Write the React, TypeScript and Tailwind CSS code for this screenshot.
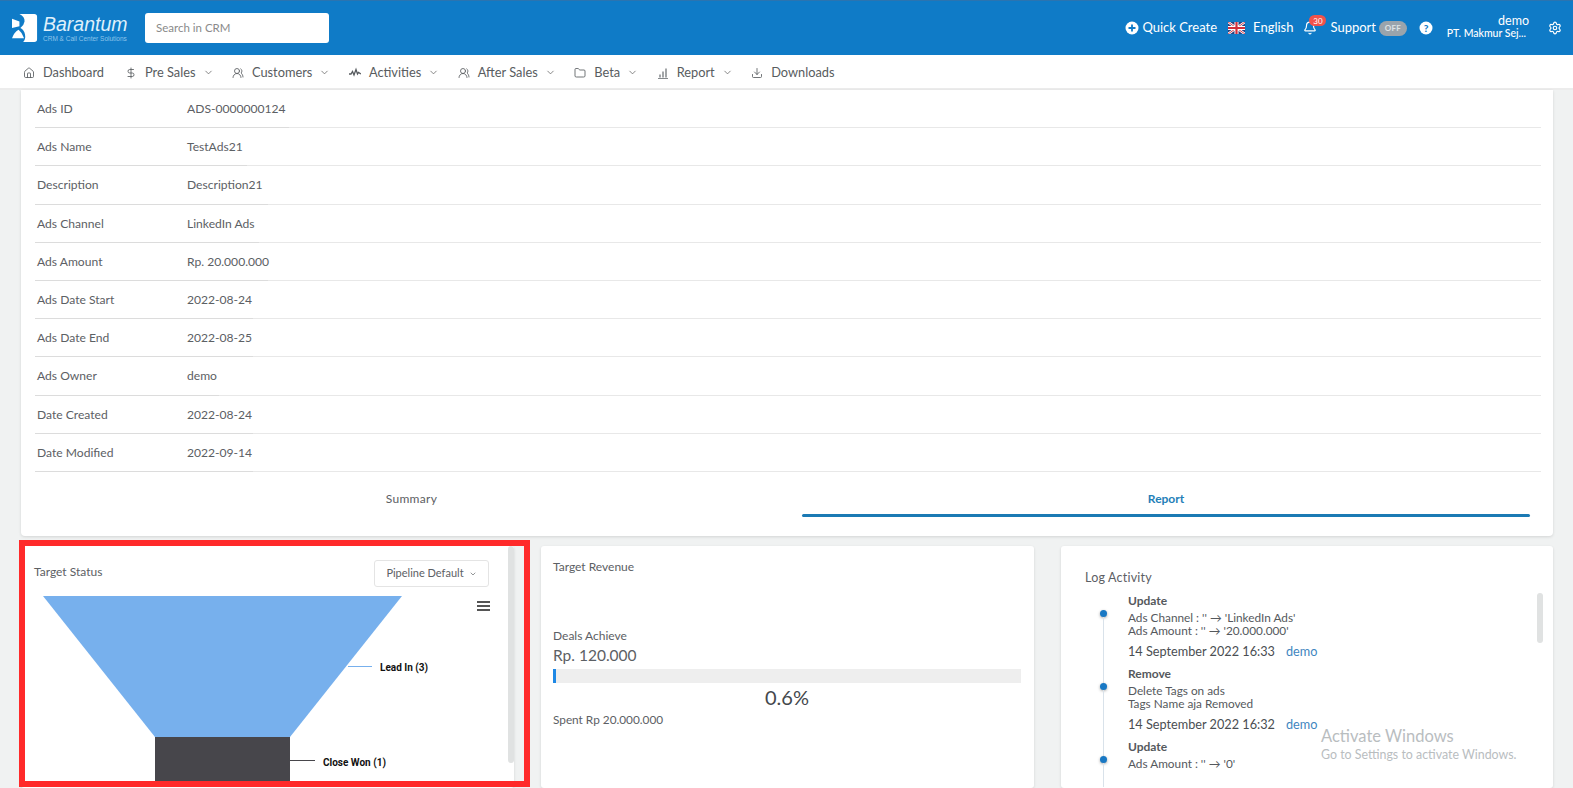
import React from "react";
import { House, DollarSign, UsersRound, Folder, Download, ChevronDown, Bell, Settings } from "lucide-react";

function PulseIcon({ className }: { size?: number; strokeWidth?: number; className?: string }) {
  return (
    <svg width="12" height="12" viewBox="0 0 12 12" fill="none" stroke="currentColor" strokeWidth="1.300" className={className}>
      <path d="M0 7 H2 L3.500 4.500 L5 8 L7 2.500 L8.500 7 L9.500 5.500 L12 7" />
    </svg>
  );
}

function BarsIcon({ className }: { size?: number; strokeWidth?: number; className?: string }) {
  return (
    <svg width="12" height="12" viewBox="0 0 12 12" fill="none" stroke="#85898c" className={className}>
      <path d="M1 11.500 H11" strokeWidth="1" />
      <path d="M3 10.500 V7.500 M6 10.500 V4.500 M9 10.500 V1.500" strokeWidth="1.500" />
    </svg>
  );
}

const navItems = [
  { label: "Dashboard", icon: House, chevron: false },
  { label: "Pre Sales", icon: DollarSign, chevron: true },
  { label: "Customers", icon: UsersRound, chevron: true },
  { label: "Activities", icon: PulseIcon, chevron: true },
  { label: "After Sales", icon: UsersRound, chevron: true },
  { label: "Beta", icon: Folder, chevron: true },
  { label: "Report", icon: BarsIcon, chevron: true },
  { label: "Downloads", icon: Download, chevron: false },
];

const rows = [
  ["Ads ID", "ADS-0000000124", "w-[254px]"],
  ["Ads Name", "TestAds21", "w-[212px]"],
  ["Description", "Description21", "w-[233px]"],
  ["Ads Channel", "LinkedIn Ads", "w-[224px]"],
  ["Ads Amount", "Rp. 20.000.000", "w-[233px]"],
  ["Ads Date Start", "2022-08-24", "w-[218px]"],
  ["Ads Date End", "2022-08-25", "w-[218px]"],
  ["Ads Owner", "demo", "w-[184px]"],
  ["Date Created", "2022-08-24", "w-[218px]"],
  ["Date Modified", "2022-09-14", "w-[218px]"],
];

function Logo() {
  return (
    <svg width="26" height="30" viewBox="0 0 28 32" className="shrink-0">
      <path d="M8 1 H24 Q27 1 27 4 V28 Q27 31 24 31 H12 Q15 28 14 23 Q13 18 9 16 Q13 13 13.500 9 Q14 4 8 1 Z" fill="#fff" />
      <path d="M0 6 L8 9 L8 14 L0 16 Z" fill="#fff" />
      <path d="M7 18 Q11 21 13 27 H0 Q2 21 7 18 Z" fill="#fff" />
    </svg>
  );
}

function Flag() {
  return (
    <svg width="17" height="12" viewBox="0 0 17 12" className="shrink-0">
      <rect width="17" height="12" fill="#27407f" />
      <path d="M0 0 L17 12 M17 0 L0 12" stroke="#fff" strokeWidth="2.400" />
      <path d="M0 0 L17 12 M17 0 L0 12" stroke="#d22f3c" strokeWidth="0.900" />
      <path d="M8.500 0 V12 M0 6 H17" stroke="#fff" strokeWidth="4" />
      <path d="M8.500 0 V12 M0 6 H17" stroke="#d22f3c" strokeWidth="2.200" />
    </svg>
  );
}

function Header() {
  return (
    <header className="flex h-[55px] shrink-0 items-center border-t border-[#2b74b0] bg-[#0f7bc7] pl-[12px] pr-[11px] text-white">
      <Logo />
      <div className="ml-[5px] flex w-[84px] flex-col">
        <span className="text-[19.500px] italic leading-[20px] [font-family:'Liberation_Sans',sans-serif] font-light text-[#dff0fb]">Barantum</span>
        <span className="mt-[1px] whitespace-nowrap text-[6.500px] leading-[7px] text-[#8ec4ea] [font-family:'Liberation_Sans',sans-serif]">CRM &amp; Call Center Solutions</span>
      </div>
      <div className="ml-[18px] flex h-[30px] w-[184px] items-center rounded-[3px] bg-white pl-[11px] text-[11.500px] text-[#8a8a8a]">Search in CRM</div>
      <div className="ml-auto flex items-center text-[13px]">
        <svg width="14" height="14" viewBox="0 0 14 14" className="shrink-0">
          <circle cx="7" cy="7" r="6.500" fill="#fff" />
          <path d="M7 3.500 V10.500 M3.500 7 H10.500" stroke="#0f7bc7" strokeWidth="1.800" />
        </svg>
        <span className="ml-[3px]">Quick Create</span>
        <span className="ml-[11px]"><Flag /></span>
        <span className="ml-[8px]">English</span>
        <span className="relative ml-[10px] flex">
          <Bell size={14} strokeWidth={2} />
          <span className="absolute -top-[6px] left-[6px] flex h-[11px] w-[17px] items-center justify-center rounded-full bg-[#f0524b] text-[8px] leading-none">30</span>
        </span>
        <span className="ml-[13px]">Support</span>
        <span className="ml-[3px] flex h-[15px] w-[28px] items-center justify-center rounded-full bg-[#9aa4ac] text-[8px] font-bold tracking-[0.3px] text-[#dfe3e6]">OFF</span>
        <svg width="14" height="14" viewBox="0 0 14 14" className="ml-[12px] shrink-0">
          <circle cx="7" cy="7" r="6.500" fill="#fff" />
          <text x="7" y="10.500" textAnchor="middle" fontSize="10" fontWeight="900" fill="#0f7bc7">?</text>
        </svg>
        <div className="mb-[3px] ml-[10px] flex w-[84px] flex-col items-end pr-[1px]">
          <span className="-mr-[3px] text-[12.500px] leading-[13px]">demo</span>
          <span className="whitespace-nowrap text-[10.500px] font-medium leading-[12px]">PT. Makmur Sej...</span>
        </div>
        <Settings size={14} strokeWidth={2} className="ml-[21px]" />
      </div>
    </header>
  );
}

function Nav() {
  return (
    <nav className="flex h-[35px] shrink-0 items-center border-b-2 border-[#ececec] bg-white pl-[23px] pt-[2px] text-[12.800px] text-[#585c60]">
      {navItems.map((item) => {
        const Icon = item.icon;
        return (
          <div key={item.label} className="mr-[18.500px] flex items-center last:mr-0 first:mr-[21px]">
            <Icon size={12} strokeWidth={1.700} className="shrink-0" />
            <span className="ml-[8px] whitespace-nowrap">{item.label}</span>
            {item.chevron && <ChevronDown size={11} strokeWidth={1.700} className="ml-[7px] text-[#666]" />}
          </div>
        );
      })}
    </nav>
  );
}

function DetailCard() {
  return (
    <section className="flex h-[446px] shrink-0 flex-col rounded-b-[4px] bg-white pl-[14px] pr-[12px] shadow-[0_1px_3px_rgba(0,0,0,0.12)]">
      {rows.map(([label, value, w]) => (
        <div key={label} className="h-[38.200px] shrink-0 border-b border-[#e8e8e8]">
          <div className={`flex h-[38.200px] items-center border-b border-[#dcdcdc] pl-[2px] pt-[1px] text-[12.100px] text-[#5c6064] ${w}`}>
            <span className="w-[150px] shrink-0">{label}</span>
            <span className="whitespace-nowrap">{value}</span>
          </div>
        </div>
      ))}
      <div className="grid grid-cols-2 pt-[18px] text-[12px]">
        <div className="text-center tracking-[0.3px] text-[#5c6064]">Summary</div>
        <div className="ml-[14px] mr-[11px] flex flex-col">
          <span className="h-[24px] text-center font-bold text-[#2480b8]">Report</span>
          <span className="h-[3px] rounded-full bg-[#1b7ab4]"></span>
        </div>
      </div>
    </section>
  );
}

function Funnel() {
  return (
    <svg width="480" height="190" viewBox="0 0 480 190" className="block">
      <polygon points="22,5 381,5 269,146 134,146" fill="#77b0ed" />
      <rect x="134" y="146" width="135" height="44" fill="#47464b" />
      <line x1="327" y1="75.500" x2="351" y2="75.500" stroke="#77b0ed" />
      <line x1="269" y1="169.500" x2="294" y2="169.500" stroke="#47464b" />
      <text x="359" y="80" fontSize="10" fontWeight="700" fill="#111" fontFamily="Roboto, sans-serif">Lead In (3)</text>
      <text x="302" y="175" fontSize="10" fontWeight="700" fill="#111" fontFamily="Roboto, sans-serif">Close Won (1)</text>
      <path d="M456 11 H469 M456 15 H469 M456 19 H469" stroke="#555" strokeWidth="2" />
    </svg>
  );
}

function TargetStatus() {
  return (
    <div className="relative overflow-hidden rounded-[3px] bg-white shadow-[0_1px_3px_rgba(0,0,0,0.12)]">
      <div className="flex items-start justify-between pl-[13px] pr-[25px] pt-[14px]">
        <span className="mt-[3px] text-[12px] text-[#5c6064]">Target Status</span>
        <div className="flex h-[27px] w-[115px] items-center justify-center gap-[5px] rounded-[3px] border border-[#e4e4e4] text-[11px] text-[#5c6064]">
          Pipeline Default
          <ChevronDown size={8} strokeWidth={2} />
        </div>
      </div>
      <div className="pt-[4px]"><Funnel /></div>
      <span className="absolute right-0 top-0 h-[217px] w-[6px] rounded-full bg-[#e0e2e2]"></span>
    </div>
  );
}

function TargetRevenue() {
  return (
    <div className="rounded-[3px] bg-white pl-[12px] pr-[13px] pt-[13px] text-[#5c6064] shadow-[0_1px_3px_rgba(0,0,0,0.12)]">
      <div className="text-[12px] leading-[16px]">Target Revenue</div>
      <div className="mt-[53px] text-[12px] leading-[16px]">Deals Achieve</div>
      <div className="mt-[1px] text-[15.500px] leading-[20px]">Rp. 120.000</div>
      <div className="mt-[4px] h-[14px] w-full bg-[#eeeeee]">
        <div className="h-full w-[3px] bg-[#1e88e5]"></div>
      </div>
      <div className="mt-[1px] text-center text-[20px] leading-[27px] text-[#44484c]">0.6%</div>
      <div className="mt-[1px] text-[11.800px] leading-[16px]">Spent Rp 20.000.000</div>
    </div>
  );
}

function LogEntry({ title, lines, date }: { title: string; lines: string[]; date?: string }) {
  return (
    <div className={`relative pl-[67px] ${date ? "pb-[6px]" : ""}`}>
      <span className="absolute left-[39px] top-[17px] h-[7px] w-[7px] rounded-full bg-[#1878c4] shadow-[0_1px_3px_rgba(0,0,0,0.35)]"></span>
      <span className="absolute bottom-[-17px] left-[42px] top-[24px] w-px bg-[#d9e2ea]"></span>
      <div className="text-[12px] font-bold leading-[16px] text-[#55595d]">{title}</div>
      <div className="mt-[2px] text-[11.800px] leading-[13px] text-[#55595d]">
        {lines.map((l) => (
          <div key={l}>{l}</div>
        ))}
      </div>
      {date && (
        <div className="mt-[6px] flex text-[12.700px] leading-[17px] text-[#4a4e52]">
          <span>{date}</span>
          <span className="ml-[11px] text-[#3f86c0]">demo</span>
        </div>
      )}
    </div>
  );
}

function LogActivity() {
  return (
    <div className="relative overflow-hidden rounded-[3px] bg-white pt-[24px] shadow-[0_1px_3px_rgba(0,0,0,0.12)]">
      <div className="pl-[24px] text-[12.500px] leading-[16px] tracking-[0.2px] text-[#5c6064]">Log Activity</div>
      <div className="mt-[7px] flex flex-col">
        <LogEntry title="Update" lines={["Ads Channel : '' → 'LinkedIn Ads'", "Ads Amount : '' → '20.000.000'"]} date="14 September 2022 16:33" />
        <LogEntry title="Remove" lines={["Delete Tags on ads", "Tags Name aja Removed"]} date="14 September 2022 16:32" />
        <LogEntry title="Update" lines={["Ads Amount : '' → '0'"]} />
      </div>
      <span className="absolute right-[10px] top-[47px] h-[50px] w-[6px] rounded-full bg-[#e0e2e2]"></span>
    </div>
  );
}

export default function App() {
  return (
    <div className="relative flex h-[788px] w-[1573px] flex-col overflow-hidden bg-[#f0f2f2] [font-family:Lato,sans-serif]">
      <Header />
      <Nav />
      <main className="flex min-h-0 flex-1 flex-col pl-[21px] pr-[20px]">
        <DetailCard />
        <div className="mt-[10px] grid min-h-0 flex-1 grid-cols-[493px_493px_492px] gap-x-[27px]">
          <TargetStatus />
          <TargetRevenue />
          <LogActivity />
        </div>
      </main>
      <div className="pointer-events-none absolute left-[19px] top-[540px] h-[247px] w-[511px] border-[6px] border-[#ff2a2a]"></div>
      <div className="pointer-events-none absolute left-[1321px] top-[726px] text-[#b9bdbf]">
        <div className="text-[16.500px] leading-[20px]">Activate Windows</div>
        <div className="mt-[1px] text-[12.400px] leading-[16px]">Go to Settings to activate Windows.</div>
      </div>
    </div>
  );
}
